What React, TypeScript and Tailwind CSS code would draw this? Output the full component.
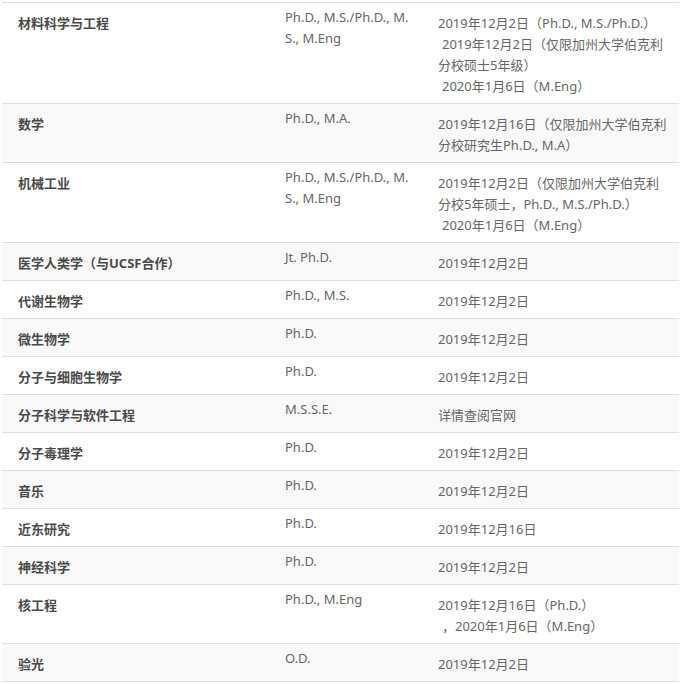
type Row = {
  name: string;
  degree: string[];
  deadline: string[];
};

// leading "^" marks a line that starts with a space in the source text
const ROWS: Row[] = [
  {
    name: '材料科学与工程',
    degree: ['Ph.D., M.S./Ph.D., M.', 'S., M.Eng'],
    deadline: ['2019年12月2日（Ph.D., M.S./Ph.D.）', '^2019年12月2日（仅限加州大学伯克利', '分校硕士5年级）', '^2020年1月6日（M.Eng）'],
  },
  {
    name: '数学',
    degree: ['Ph.D., M.A.'],
    deadline: ['2019年12月16日（仅限加州大学伯克利', '分校研究生Ph.D., M.A）'],
  },
  {
    name: '机械工业',
    degree: ['Ph.D., M.S./Ph.D., M.', 'S., M.Eng'],
    deadline: ['2019年12月2日（仅限加州大学伯克利', '分校5年硕士，Ph.D., M.S./Ph.D.）', '^2020年1月6日（M.Eng）'],
  },
  { name: '医学人类学（与UCSF合作）', degree: ['Jt. Ph.D.'], deadline: ['2019年12月2日'] },
  { name: '代谢生物学', degree: ['Ph.D., M.S.'], deadline: ['2019年12月2日'] },
  { name: '微生物学', degree: ['Ph.D.'], deadline: ['2019年12月2日'] },
  { name: '分子与细胞生物学', degree: ['Ph.D.'], deadline: ['2019年12月2日'] },
  { name: '分子科学与软件工程', degree: ['M.S.S.E.'], deadline: ['详情查阅官网'] },
  { name: '分子毒理学', degree: ['Ph.D.'], deadline: ['2019年12月2日'] },
  { name: '音乐', degree: ['Ph.D.'], deadline: ['2019年12月2日'] },
  { name: '近东研究', degree: ['Ph.D.'], deadline: ['2019年12月16日'] },
  { name: '神经科学', degree: ['Ph.D.'], deadline: ['2019年12月2日'] },
  { name: '核工程', degree: ['Ph.D., M.Eng'], deadline: ['2019年12月16日（Ph.D.）', '^，2020年1月6日（M.Eng）'] },
  { name: '验光', degree: ['O.D.'], deadline: ['2019年12月2日'] },
];

function Lines({ lines }: { lines: string[] }) {
  return (
    <>
      {lines.map((line, i) =>
        line.startsWith('^') ? (
          <div key={i} className="whitespace-nowrap pl-[4px]">
            {line.slice(1)}
          </div>
        ) : (
          <div key={i} className="whitespace-nowrap">
            {line}
          </div>
        ),
      )}
    </>
  );
}

export default function App() {
  return (
    <div
      className="min-h-[684px] bg-white pt-[2px]"
      style={{ fontFamily: '"Noto Sans", "Noto Sans CJK SC", sans-serif' }}
    >
      <div className="ml-[2px] w-[677px] border-t border-[#dedede] text-[13px] leading-[21px]">
        {ROWS.map((row, i) => (
          <div
            key={row.name}
            className={`grid grid-cols-[267px_153px_257px] border-b border-[#dedede] ${
              i % 2 === 1 ? 'bg-[#f9f9f9]' : 'bg-white'
            }`}
          >
            <div className="pl-[16px] pt-[10px] pb-[6px] font-bold text-[#4a4a4a]">{row.name}</div>
            <div className="pl-[16px] pt-[4px] pb-[6px] text-[#666]">
              <Lines lines={row.degree} />
            </div>
            <div className="pl-[16px] pt-[10px] pb-[6px] text-[#666]">
              <Lines lines={row.deadline} />
            </div>
          </div>
        ))}
      </div>
    </div>
  );
}
